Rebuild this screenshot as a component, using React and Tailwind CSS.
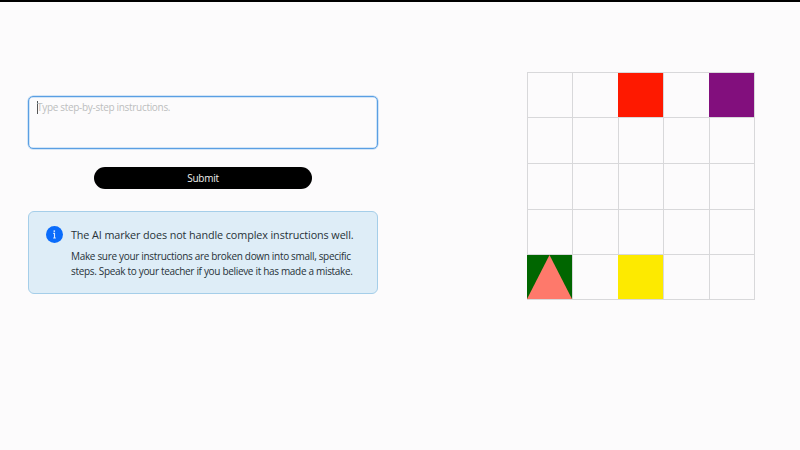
const cellColors = {
  2: "-ml-px bg-[#fe1900]",
  4: "-ml-px bg-[#820f7d]",
  20: "-ml-px bg-[#006600]",
  22: "-ml-px bg-[#fdea00]",
};

function InfoIcon() {
  return (
    <svg className="mt-[13.5px] h-[17px] w-[17px] shrink-0" viewBox="0 0 17 17">
      <circle cx="8.5" cy="8.5" r="8.5" fill="#0a6cfb" />
      <circle cx="8.3" cy="5.1" r="0.9" fill="#dcebff" />
      <path d="M7.2 7.4h1.3v4.6M7.2 12h2.6" stroke="#dcebff" strokeWidth="1.1" fill="none" />
    </svg>
  );
}

function Board() {
  return (
    <div className="ml-[149px] mt-[70px] grid h-[228px] w-[228px] grid-cols-[44px_45px_44px_45px_44px] grid-rows-[44px_45px_45px_44px_44px] gap-px bg-[#d8d8da] p-px">
      {Array.from({ length: 25 }, (_, i) => (
        <div key={i} className={cellColors[i] || "bg-[#fcfbfc]"}>
          {i === 20 && (
            <svg className="block h-full w-full" viewBox="0 0 45 44" preserveAspectRatio="none">
              <path d="M22.5 0L45 44H0Z" fill="#fe796b" />
            </svg>
          )}
        </div>
      ))}
    </div>
  );
}

export default function App() {
  return (
    <div className="flex h-[450px] w-[800px] items-start overflow-hidden border-t-2 border-black bg-[#fcfbfc] pl-7 font-['Open_Sans','Noto_Sans',sans-serif]">
      <div className="flex w-[350px] flex-col pt-[94px]">
        <div className="flex h-[53px] items-start rounded-[5px] border border-[#5a9fe3] pl-2 pt-1 shadow-[0_0_0_0.5px_#a9cff2,inset_0_0_0_0.5px_#a9cff2]">
          <span className="h-[13px] w-px bg-[#555]" />
          <span className="-ml-px -mt-px whitespace-nowrap text-[10px] leading-[14px] tracking-[-0.31px] text-[#bcbebe]">Type step-by-step instructions.</span>
        </div>
        <button className="ml-[66px] mt-[18px] h-[22px] w-[218px] rounded-full bg-black text-[10px] leading-[22px] tracking-[-0.25px] text-[#eee]">
          Submit
        </button>
        <div className="mt-[22px] flex h-[83px] gap-2 rounded-[6px] border border-[#a5cee9] bg-[#deedf7] pl-[17px]">
          <InfoIcon />
          <div className="whitespace-nowrap pt-[15px] text-[#273238]">
            <p className="text-[10.8px] leading-[16px] tracking-[-0.1px]">The AI marker does not handle complex instructions well.</p>
            <p className="mt-[6px] text-[10px] leading-[15px] tracking-[-0.32px]">
              Make sure your instructions are broken down into small, specific
              <br />
              steps. Speak to your teacher if you believe it has made a mistake.
            </p>
          </div>
        </div>
      </div>
      <Board />
    </div>
  );
}
